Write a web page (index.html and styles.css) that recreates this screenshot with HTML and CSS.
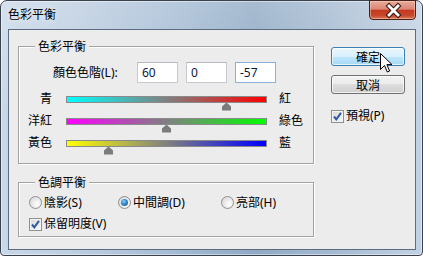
FILE: index.html
```html
<!DOCTYPE html>
<html>
<head>
<meta charset="utf-8">
<link rel="stylesheet" href="styles.css">
</head>
<body>
<div class="window">
  <div class="titlebar">
    <span class="title">色彩平衡</span>
    <div class="close">
      <svg width="45" height="19" viewBox="0 0 45 19">
        <path d="M19 5 L28 14 M28 5 L19 14" stroke="#3a1610" stroke-width="4.8" stroke-linecap="square" fill="none"/>
        <path d="M19 5 L28 14 M28 5 L19 14" stroke="#ffffff" stroke-width="2.8" stroke-linecap="square" fill="none"/>
      </svg>
    </div>
  </div>
  <div class="client">
    <div class="left">
      <div class="group g1">
        <span class="legend">色彩平衡</span>
        <div class="levels">
          <span class="levels-label">顏色色階(L):</span>
          <div class="field">60</div>
          <div class="field">0</div>
          <div class="field focus">-57</div>
        </div>
        <div class="sliders">
          <div class="srow">
            <span class="lab-l">青</span>
            <div class="track t1"><span class="thumb" style="left:155px"></span></div>
            <span class="lab-r">紅</span>
          </div>
          <div class="srow">
            <span class="lab-l">洋紅</span>
            <div class="track t2"><span class="thumb" style="left:95px"></span></div>
            <span class="lab-r">綠色</span>
          </div>
          <div class="srow">
            <span class="lab-l">黃色</span>
            <div class="track t3"><span class="thumb" style="left:37px"></span></div>
            <span class="lab-r">藍</span>
          </div>
        </div>
      </div>
      <div class="group g2">
        <span class="legend">色調平衡</span>
        <div class="radios">
          <div class="opt o1"><span class="radio"></span><span>陰影(S)</span></div>
          <div class="opt o2"><span class="radio on"></span><span>中間調(D)</span></div>
          <div class="opt"><span class="radio"></span><span>亮部(H)</span></div>
        </div>
        <div class="opt check-row">
          <span class="cb"><svg width="11" height="11" viewBox="0 0 11 11"><path d="M2 5.5 L4.3 8.3 L9 1.8" stroke="#2f5ba6" stroke-width="2" fill="none"/></svg></span>
          <span>保留明度(V)</span>
        </div>
      </div>
    </div>
    <div class="right">
      <div class="btn hot">確定</div>
      <div class="btn cancel">取消</div>
      <div class="opt preview">
        <span class="cb"><svg width="11" height="11" viewBox="0 0 11 11"><path d="M2 5.5 L4.3 8.3 L9 1.8" stroke="#2f5ba6" stroke-width="2" fill="none"/></svg></span>
        <span>預視(P)</span>
      </div>
    </div>
  </div>
  <svg class="cursor" width="13" height="21" viewBox="0 0 13 21">
    <path d="M0.5 0.5 L0.5 16.5 L4.5 12.5 L7.3 19 L9.6 18 L6.9 11.6 L12 11.6 Z" fill="#ffffff" stroke="#000000" stroke-width="1" stroke-linejoin="miter"/>
  </svg>
</div>
</body>
</html>
```

FILE: styles.css
```css
* { box-sizing: border-box; }
html, body { margin: 0; padding: 0; background: #ffffff; }
body {
  font-family: "Noto Sans", "Noto Sans CJK TC", sans-serif;
  font-size: 12px;
  line-height: 14px;
  color: #000;
}
.window {
  position: relative;
  width: 423px;
  height: 256px;
  border: 1px solid #3a424e;
  border-radius: 7px 7px 4px 4px;
  background:
    linear-gradient(180deg, rgba(255,255,255,0.22), rgba(255,255,255,0) 45%),
    linear-gradient(90deg, #c9d8e8 0%, #bccde0 18%, #a8bed6 38%, #8fa9c4 60%, #a3b9d0 78%, #c2d2e3 100%);
  box-shadow: inset 0 0 0 1px rgba(255,255,255,0.45);
  display: flex;
  flex-direction: column;
}
.titlebar {
  height: 28px;
  padding: 6px 0 0 7px;
  display: flex;
  align-items: flex-start;
}
.title {
  font-family: "Noto Sans CJK TC", sans-serif;
  text-shadow: 0 0 6px rgba(255,255,255,0.9);
}
.close {
  position: absolute;
  top: -1px;
  left: 368px;
  width: 47px;
  height: 20px;
  border: 1px solid #47201a;
  border-radius: 0 0 4px 4px;
  background: linear-gradient(180deg, #e9ab9d 0%, #dc8675 45%, #c43a20 52%, #c8472b 80%, #dd7a56 100%);
  box-shadow: inset 0 0 0 1px rgba(255,220,200,0.45);
}
.close svg { display: block; }
.client {
  margin: 0 6px 5px 7px;
  height: 221px;
  border: 1px solid #5b6c80;
  background: #ececec;
  display: flex;
  padding: 16px 0 0 9px;
}
.left {
  width: 296px;
  display: flex;
  flex-direction: column;
}
.group {
  position: relative;
  border: 1px solid #a3a3a3;
  box-shadow: inset 1px 1px 0 #ffffff, 1px 1px 0 #ffffff;
}
.legend {
  position: absolute;
  top: -8px;
  left: 16px;
  padding: 0 3px;
  background: #ececec;
  font-family: "Noto Sans CJK TC", sans-serif;
}
.g1 {
  height: 118px;
  padding-top: 15px;
}
.levels {
  display: flex;
  align-items: center;
  height: 21px;
  padding-left: 34px;
}
.levels-label { width: 84px; }
.field {
  width: 41px;
  height: 21px;
  border: 1px solid #c6cad0;
  border-top-color: #b5b9bf;
  background: #fff;
  padding-left: 4px;
  line-height: 19px;
  color: #0b1640;
}
.field + .field { margin-left: 8px; }
.field.focus { border-color: #8cb0d6; }
.sliders { margin-top: 5px; }
.srow {
  display: flex;
  align-items: center;
  height: 22px;
}
.lab-l { width: 33px; text-align: right; }
.lab-r { margin-left: 12px; }
.track {
  position: relative;
  width: 201px;
  height: 7px;
  margin-left: 14px;
  border: 1px solid #8a8a8a;
}
.t1 { background: linear-gradient(90deg, #00ffff, #808080 50%, #ff0000); }
.t2 { background: linear-gradient(90deg, #ff00ff, #808080 50%, #00ff00); }
.t3 { background: linear-gradient(90deg, #ffff00, #808080 50%, #0000ff); }
.thumb {
  position: absolute;
  top: 6px;
  width: 9px;
  height: 8px;
  background: #7b7b7b;
  clip-path: polygon(50% 0, 100% 50%, 100% 100%, 0 100%, 0 50%);
}
.g2 {
  margin-top: 18px;
  height: 55px;
  padding-top: 13px;
}
.radios {
  display: flex;
  align-items: center;
  height: 13px;
  padding-left: 10px;
}
.opt {
  display: flex;
  align-items: center;
  gap: 2px;
}
.o1 { width: 89px; }
.o2 { width: 103px; }
.radio {
  width: 13px;
  height: 13px;
  border-radius: 50%;
  border: 1px solid #8f9090;
  background: radial-gradient(circle at 65% 65%, #ffffff 0, #f0f0f0 35%, #cfcfcf 100%);
  display: flex;
  align-items: center;
  justify-content: center;
}
.radio.on::after {
  content: "";
  width: 7px;
  height: 7px;
  border-radius: 50%;
  background: radial-gradient(circle at 40% 35%, #8fd0f5 0, #3a8fcc 40%, #154f80 100%);
}
.check-row {
  margin-top: 8px;
  padding-left: 10px;
}
.cb {
  width: 13px;
  height: 13px;
  border: 1px solid #8f9090;
  background: linear-gradient(135deg, #d8d8d8, #f8f8f8);
  box-shadow: inset 0 0 0 1px #f4f4f4;
  display: flex;
  align-items: center;
  justify-content: center;
}
.cb svg { display: block; }
.right {
  margin-left: 17px;
  padding-top: 1px;
  width: 74px;
  display: flex;
  flex-direction: column;
}
.btn {
  width: 74px;
  height: 19px;
  border: 1px solid #707070;
  border-radius: 3px;
  background: linear-gradient(180deg, #f2f2f2 0%, #ebebeb 50%, #dddddd 50%, #cfcfcf 100%);
  box-shadow: inset 0 0 0 1px rgba(255,255,255,0.7);
  text-align: center;
  line-height: 17px;
  font-family: "Noto Sans CJK TC", sans-serif;
}
.btn.hot {
  border-color: #3c7fb1;
  background: linear-gradient(180deg, #eaf6fd 0%, #d9f0fc 50%, #bee6fd 50%, #a7d9f5 100%);
}
.cancel { margin-top: 9px; }
.preview {
  margin-top: 15px;
}
.cursor {
  position: absolute;
  left: 379px;
  top: 52px;
}
```
